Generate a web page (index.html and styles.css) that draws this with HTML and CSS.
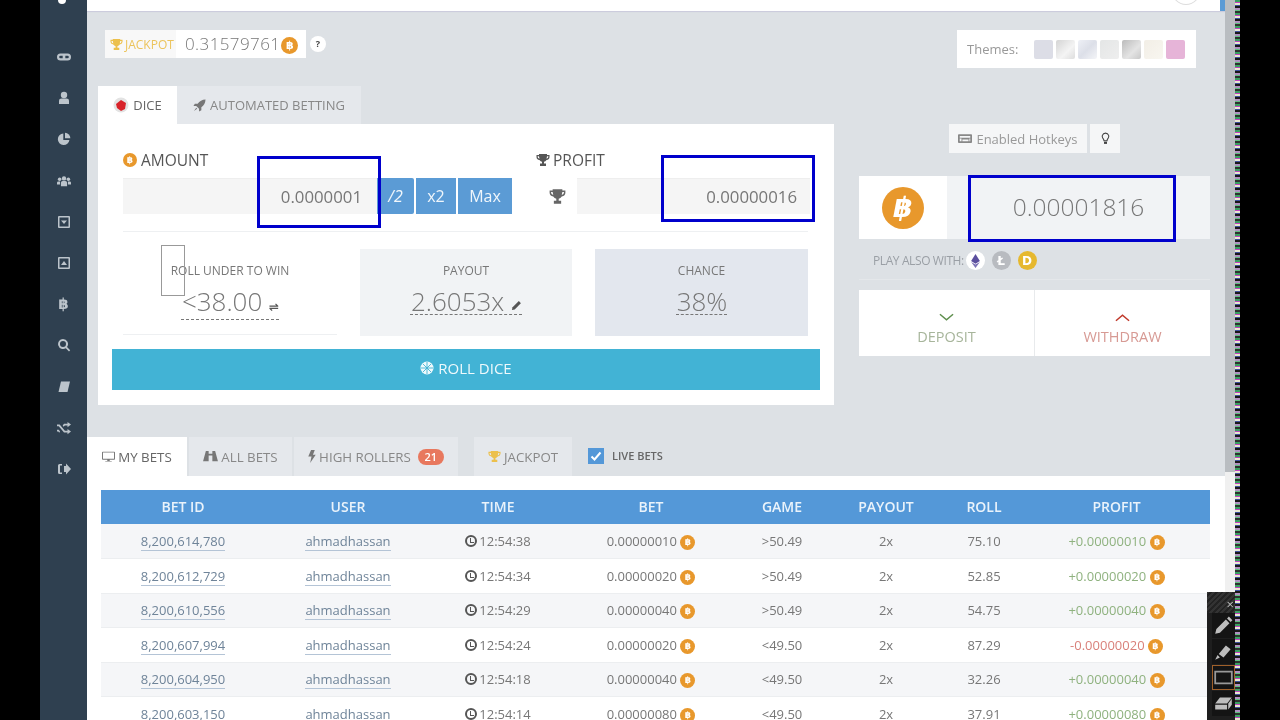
FILE: index.html
```html
<!DOCTYPE html>
<html lang="en">
<head>
    <meta charset="UTF-8">
    <meta name="viewport" content="width=device-width, initial-scale=1.0">
    <title>Dice</title>
    <link rel="stylesheet" href="styles.css">
</head>
<body>
<div class="screen">
    <div class="letterbox"></div>

    <nav class="sidebar">
        <svg class="side-top" viewBox="0 0 14 14"><circle cx="7" cy="7" r="4"/></svg>
        <svg viewBox="0 0 16 14"><path d="M4 3h8a4 4 0 0 1 0 8H4a4 4 0 0 1 0-8zm0 2.500a1.500 1.500 0 1 0 0 3h2.500v-3zm5.500 0v3H12a1.500 1.500 0 1 0 0-3z"/></svg>
        <svg viewBox="0 0 14 14"><circle cx="7" cy="4" r="3.200"/><path d="M2 13V9.500Q2 7.500 4.500 7.500h5Q12 7.500 12 9.500V13z"/></svg>
        <svg viewBox="0 0 14 14"><path d="M6.300 1.500A5.800 5.800 0 1 0 12.400 8H6.300z"/><path d="M8 .8V6.300h5.400A5.600 5.600 0 0 0 8 .8z"/></svg>
        <svg viewBox="0 0 16 14"><circle cx="8" cy="4" r="2.500"/><circle cx="3" cy="5" r="2"/><circle cx="13" cy="5" r="2"/><path d="M4.500 13V9q0-2 2-2h3q2 0 2 2v4zM0 11V9q0-1.500 1.500-1.500h2V11zm12.500 0V7.500h2Q16 7.500 16 9v2z"/></svg>
        <svg viewBox="0 0 14 14"><path fill-rule="evenodd" d="M2 1h10a1 1 0 0 1 1 1v10a1 1 0 0 1-1 1H2a1 1 0 0 1-1-1V2a1 1 0 0 1 1-1zm.5 1.500v9h9v-9zM4 5.500h6L7 9z"/></svg>
        <svg viewBox="0 0 14 14"><path fill-rule="evenodd" d="M2 1h10a1 1 0 0 1 1 1v10a1 1 0 0 1-1 1H2a1 1 0 0 1-1-1V2a1 1 0 0 1 1-1zm.5 1.500v9h9v-9zM4 9h6L7 5z"/></svg>
        <span class="side-btc">฿</span>
        <svg viewBox="0 0 14 14"><path fill-rule="evenodd" d="M6 1a5 5 0 0 1 4 8l3.200 3.200-1.200 1.200L8.800 10.200A5 5 0 1 1 6 1zm0 2a3 3 0 1 0 0 6 3 3 0 0 0 0-6z"/></svg>
        <svg viewBox="0 0 14 14"><path d="M4 1.500h9L10.500 12H1.500z"/></svg>
        <svg viewBox="0 0 16 14"><path d="M0 3h3l6 7h3V8l4 3-4 3v-2H8L2 5H0zM0 9h2l1.500 2-1 1.500L1.500 11H0zM8 2h4V0l4 3-4 3V4H9L7.500 5.500l-1-1.500z"/></svg>
        <svg viewBox="0 0 14 14"><path d="M5 2H2.500Q1 2 1 3.500v7Q1 12 2.500 12H5v-1.500H3v-7h2zM7 4h2V1.500L14 7l-5 5.500V10H7z"/></svg>
    </nav>

    <main class="main">
        <div class="top-strip"><span class="top-circle"></span><span class="top-thumb"></span></div>

        <div class="game-area">
            <section class="game-col">
                <div class="jackpot-row">
                    <div class="jackpot-box">
                        <span class="jackpot-label">
                            <svg class="trophy" viewBox="0 0 14 14"><path d="M3 1h8v1h2.500v2Q13.500 6.500 10.500 7 9.500 8.500 8 8.800V10.500h2V13H4v-2.500h2V8.800Q4.500 8.500 3.500 7 .5 6.500.5 4V2H3zM1.700 3.200V4q0 1.300 1.800 1.800L3 3.200zm10.600 0H11l-.5 2.600q1.800-.5 1.800-1.800z"/></svg>
                            JACKPOT
                        </span>
                        <span class="jackpot-value">0.31579761 <span class="coin coin-md">฿</span></span>
                    </div>
                    <span class="help-dot">?</span>
                </div>

                <div class="game-tabs">
                    <div class="tab tab-on dice-tab">
                        <svg class="dice-icon" viewBox="0 0 16 16"><circle cx="8" cy="8" r="7.500" fill="#e3e3e3"/><path d="M8 3l5 3-1 6-4 2-4-3-1-4z" fill="#d8232a"/></svg>
                        DICE
                    </div>
                    <div class="tab tab-auto">
                        <svg class="tab-icon" viewBox="0 0 14 14"><path d="M13.500.5Q8 .8 5 5H2L.5 7.500h3L6.500 10.500v3L9 12V9q4.200-3 4.500-8.500zM3.500 9.500L1 13l3.500-2.500z"/></svg>
                        AUTOMATED BETTING
                    </div>
                </div>

                <div class="game-panel">
                    <div class="bet-row">
                        <div class="amount-col">
                            <div class="field-label"><span class="coin coin-sm">฿</span> AMOUNT</div>
                            <div class="amount-line">
                                <div class="amount-input">0.0000001</div>
                                <button class="mini-btn btn-half">/2</button>
                                <button class="mini-btn btn-double">x2</button>
                                <button class="mini-btn btn-max">Max</button>
                            </div>
                        </div>
                        <div class="profit-col">
                            <div class="field-label profit-label">
                                <svg class="label-trophy" viewBox="0 0 14 14"><path d="M3 1h8v1h2.500v2Q13.500 6.500 10.500 7 9.500 8.500 8 8.800V10.500h2V13H4v-2.500h2V8.800Q4.500 8.500 3.500 7 .5 6.500.5 4V2H3zM1.700 3.200V4q0 1.300 1.800 1.800L3 3.200zm10.600 0H11l-.5 2.600q1.800-.5 1.800-1.800z"/></svg>
                                PROFIT
                            </div>
                            <div class="profit-line">
                                <svg class="profit-trophy" viewBox="0 0 14 14"><path d="M3 1h8v1h2.500v2Q13.500 6.500 10.500 7 9.500 8.500 8 8.800V10.500h2V13H4v-2.500h2V8.800Q4.500 8.500 3.500 7 .5 6.500.5 4V2H3zM1.700 3.200V4q0 1.300 1.800 1.800L3 3.200zm10.600 0H11l-.5 2.600q1.800-.5 1.800-1.800z"/></svg>
                                <div class="profit-input">0.00000016</div>
                            </div>
                        </div>
                    </div>

                    <div class="stats-row">
                        <div class="stat stat-roll">
                            <div class="stat-title">ROLL UNDER TO WIN</div>
                            <div class="stat-value">&lt;38.00 <span class="stat-mark">⇌</span></div>
                        </div>
                        <div class="stat stat-payout">
                            <div class="stat-title">PAYOUT</div>
                            <div class="stat-value">2.6053x
                                <svg class="pencil" viewBox="0 0 12 12"><path d="M1 11l.7-3L8.500 1.200l2.300 2.300L4 10.300z"/></svg>
                            </div>
                        </div>
                        <div class="stat stat-chance">
                            <div class="stat-title">CHANCE</div>
                            <div class="stat-value">38%</div>
                        </div>
                    </div>

                    <button class="roll-btn">
                        <svg class="roll-icon" viewBox="0 0 14 14"><circle cx="7" cy="7" r="6.500"/><path d="M7 1v12M1 7h12M3 3l8 8M11 3l-8 8" stroke="#42b3d5" stroke-width=".9"/></svg>
                        ROLL DICE
                    </button>
                </div>
            </section>

            <aside class="wallet-col">
                <div class="themes-box">
                    <span class="themes-label">Themes:</span>
                    <span class="swatch sw-1"></span>
                    <span class="swatch sw-2"></span>
                    <span class="swatch sw-3"></span>
                    <span class="swatch sw-4"></span>
                    <span class="swatch sw-5"></span>
                    <span class="swatch sw-6"></span>
                    <span class="swatch sw-7"></span>
                </div>

                <div class="hotkeys-row">
                    <div class="hotkeys-box">
                        <svg class="keyboard" viewBox="0 0 16 12"><path fill-rule="evenodd" d="M1 1h14a1 1 0 0 1 1 1v8a1 1 0 0 1-1 1H1a1 1 0 0 1-1-1V2a1 1 0 0 1 1-1zm1 2v2h12V3zm0 3v3h2V6zm3 1v2h7V7zm8-1v3h1V6z"/></svg>
                        Enabled Hotkeys
                    </div>
                    <div class="bulb-box">
                        <svg class="bulb" viewBox="0 0 10 14"><path fill="none" stroke="#444" stroke-width="1.200" d="M3.300 9.500Q3.300 8 2 6.500 1 5 1.500 3.500 2.500 1 5 1t3.500 2.500Q9 5 8 6.500 6.700 8 6.700 9.500z"/><path fill="#444" d="M3.300 10.500h3.400V13H3.300z"/></svg>
                    </div>
                </div>

                <div class="wallet-box">
                    <div class="wallet-coin"><span class="coin coin-lg">฿</span></div>
                    <div class="wallet-value">0.00001816</div>
                </div>

                <div class="play-also">
                    <span class="play-label">PLAY ALSO WITH:</span>
                    <span class="alt-coin alt-eth">
                        <svg viewBox="0 0 10 16"><path fill="#5b4f9e" d="M5 0l5 8-5 3-5-3z"/><path fill="#7e74b8" d="M5 12l5-3-5 7-5-7z"/></svg>
                    </span>
                    <span class="alt-coin alt-ltc">Ł</span>
                    <span class="alt-coin alt-doge">D</span>
                </div>

                <div class="cash-box">
                    <div class="cash-btn deposit">
                        <svg class="chevron" viewBox="0 0 16 9"><path d="M1 1l7 6 7-6" fill="none" stroke="#5f8f4e" stroke-width="1.600"/></svg>
                        <span>DEPOSIT</span>
                    </div>
                    <div class="cash-btn withdraw">
                        <svg class="chevron" viewBox="0 0 16 9"><path d="M1 8l7-6 7 6" fill="none" stroke="#c0392b" stroke-width="1.600"/></svg>
                        <span>WITHDRAW</span>
                    </div>
                </div>
            </aside>
        </div>

        <section class="bets">
            <div class="bets-tabs">
                <div class="bet-tab bet-tab-on tab-my">
                    <svg class="tab-icon" viewBox="0 0 16 14"><path fill-rule="evenodd" d="M1 1h14a1 1 0 0 1 1 1v8a1 1 0 0 1-1 1H9.500v1.500H12V13H4v-.5h2.500V11H1a1 1 0 0 1-1-1V2a1 1 0 0 1 1-1zm.2 1.200v7.600h13.600V2.200z"/></svg>
                    MY BETS
                </div>
                <div class="bet-tab tab-all">
                    <svg class="tab-icon binoculars" viewBox="0 0 16 14"><path d="M3 1h3v3h4V1h3l3 11H10V6H6v6H0z"/></svg>
                    ALL BETS
                </div>
                <div class="bet-tab tab-high">
                    <svg class="tab-icon bolt" viewBox="0 0 8 14"><path d="M3 0h4L5 5h3L2 14l1.500-7H0z"/></svg>
                    HIGH ROLLERS <span class="badge">21</span>
                </div>
                <div class="bet-tab tab-jackpot">
                    <svg class="trophy" viewBox="0 0 14 14"><path d="M3 1h8v1h2.500v2Q13.500 6.500 10.500 7 9.500 8.500 8 8.800V10.500h2V13H4v-2.500h2V8.800Q4.500 8.500 3.500 7 .5 6.500.5 4V2H3zM1.700 3.200V4q0 1.300 1.800 1.800L3 3.200zm10.600 0H11l-.5 2.600q1.800-.5 1.800-1.800z"/></svg>
                    JACKPOT
                </div>
                <label class="live-toggle">
                    <span class="checkbox">
                        <svg viewBox="0 0 16 16"><path d="M3.500 8.500l3 3 6-7" fill="none" stroke="#fff" stroke-width="2"/></svg>
                    </span>
                    LIVE BETS
                </label>
            </div>

            <div class="bets-body">
                <table class="bets-table">
                    <thead>
                        <tr>
                            <th class="c-id">BET ID</th>
                            <th class="c-user">USER</th>
                            <th class="c-time">TIME</th>
                            <th class="c-bet">BET</th>
                            <th class="c-game">GAME</th>
                            <th class="c-payout">PAYOUT</th>
                            <th class="c-roll">ROLL</th>
                            <th class="c-profit">PROFIT</th>
                        </tr>
                    </thead>
                    <tbody>
                        <tr>
                            <td><a>8,200,614,780</a></td><td><a>ahmadhassan</a></td>
                            <td><span class="clock"></span>12:54:38</td>
                            <td>0.00000010 <span class="coin coin-xs">฿</span></td>
                            <td>&gt;50.49</td><td>2x</td><td>75.10</td>
                            <td class="win">+0.00000010 <span class="coin coin-xs">฿</span></td>
                        </tr>
                        <tr>
                            <td><a>8,200,612,729</a></td><td><a>ahmadhassan</a></td>
                            <td><span class="clock"></span>12:54:34</td>
                            <td>0.00000020 <span class="coin coin-xs">฿</span></td>
                            <td>&gt;50.49</td><td>2x</td><td>52.85</td>
                            <td class="win">+0.00000020 <span class="coin coin-xs">฿</span></td>
                        </tr>
                        <tr>
                            <td><a>8,200,610,556</a></td><td><a>ahmadhassan</a></td>
                            <td><span class="clock"></span>12:54:29</td>
                            <td>0.00000040 <span class="coin coin-xs">฿</span></td>
                            <td>&gt;50.49</td><td>2x</td><td>54.75</td>
                            <td class="win">+0.00000040 <span class="coin coin-xs">฿</span></td>
                        </tr>
                        <tr>
                            <td><a>8,200,607,994</a></td><td><a>ahmadhassan</a></td>
                            <td><span class="clock"></span>12:54:24</td>
                            <td>0.00000020 <span class="coin coin-xs">฿</span></td>
                            <td>&lt;49.50</td><td>2x</td><td>87.29</td>
                            <td class="lose">-0.00000020 <span class="coin coin-xs">฿</span></td>
                        </tr>
                        <tr>
                            <td><a>8,200,604,950</a></td><td><a>ahmadhassan</a></td>
                            <td><span class="clock"></span>12:54:18</td>
                            <td>0.00000040 <span class="coin coin-xs">฿</span></td>
                            <td>&lt;49.50</td><td>2x</td><td>32.26</td>
                            <td class="win">+0.00000040 <span class="coin coin-xs">฿</span></td>
                        </tr>
                        <tr>
                            <td><a>8,200,603,150</a></td><td><a>ahmadhassan</a></td>
                            <td><span class="clock"></span>12:54:14</td>
                            <td>0.00000080 <span class="coin coin-xs">฿</span></td>
                            <td>&lt;49.50</td><td>2x</td><td>37.91</td>
                            <td class="win">+0.00000080 <span class="coin coin-xs">฿</span></td>
                        </tr>
                    </tbody>
                </table>
            </div>
        </section>
    </main>

    <div class="scrollbar"><div class="scroll-thumb"></div></div>
    <div class="noise"></div>
    <div class="letterbox-right"></div>

    <!-- annotations drawn over the page -->
    <div class="mark mark-amount"></div>
    <div class="mark mark-profit"></div>
    <div class="mark mark-balance"></div>
    <div class="mark-thin"></div>

    <div class="draw-tools">
        <div class="tools-head">×</div>
        <div class="tool">
            <svg viewBox="0 0 16 16"><path d="M1 15l1-4 8-8 3 3-8 8zM11 2l1.500-1.500 3 3L14 5z"/></svg>
        </div>
        <div class="tool">
            <svg viewBox="0 0 16 16"><path d="M1 15l2-4 2 2zM4 10l6-7 4 3-6 7z"/></svg>
        </div>
        <div class="tool tool-on">
            <svg viewBox="0 0 16 16"><path fill="none" stroke="#999" stroke-width="1.500" d="M1 3h14v10H1z"/></svg>
        </div>
        <div class="tool">
            <svg viewBox="0 0 16 16"><path d="M5 3h10l-4 5H1zM1 9h10v4H1zM12 8l3-4v5l-3 4z"/></svg>
        </div>
    </div>
</div>
</body>
</html>
```

FILE: styles.css
```css
* {
    box-sizing: border-box;
}
html, body {
    margin: 0;
    height: 100%;
    overflow: hidden;
    background: #000;
}
body {
    font-family: "Open Sans", "DejaVu Sans", sans-serif;
    color: #777;
}
.screen {
    position: relative;
    display: flex;
    width: 1280px;
    height: 720px;
    overflow: hidden;
    filter: blur(0.5px);
}
.letterbox {
    width: 40px;
    background: #000;
}

/* sidebar */
.sidebar {
    width: 47px;
    background: #2f4050;
    display: flex;
    flex-direction: column;
    align-items: center;
    gap: 27.200px;
    padding-top: 50px;
    position: relative;
}
.sidebar svg {
    width: 14px;
    height: 14px;
    fill: #bcc4cb;
}
.sidebar .side-top {
    position: absolute;
    top: -7px;
    left: 15px;
    fill: #fff;
}
.side-btc {
    height: 14px;
    line-height: 14px;
    font-family: "DejaVu Sans", sans-serif;
    font-size: 15px;
    font-weight: bold;
    color: #bcc4cb;
}

/* main column */
.main {
    width: 1138px;
    background: #dde1e5;
    display: flex;
    flex-direction: column;
    overflow: hidden;
}
.top-strip {
    flex: none;
    height: 11px;
    background: #fff;
    position: relative;
    box-shadow: 0 1px 1px #ccd;
}
.top-circle {
    position: absolute;
    left: 1084px;
    top: -27px;
    width: 30px;
    height: 32px;
    border: 1px solid #ddd;
    border-radius: 50%;
}
.top-thumb {
    position: absolute;
    right: 0;
    top: 0;
    width: 5px;
    height: 11px;
    background: #5b9bd5;
}
.game-area {
    flex: none;
    height: 426px;
    display: flex;
    padding-left: 11px;
    gap: 25px;
}
.game-col {
    width: 736px;
}
.wallet-col {
    width: 351px;
}

/* jackpot */
.jackpot-row {
    display: flex;
    align-items: center;
    margin: 19px 0 0 7px;
    height: 28px;
}
.jackpot-box {
    display: flex;
    height: 28px;
    width: 201px;
    background: #fff;
}
.jackpot-label {
    width: 71px;
    background: #f8f8f8;
    padding-left: 5px;
    display: flex;
    align-items: center;
    gap: 2px;
    font-size: 12px;
    color: #ecc45c;
}
.trophy {
    width: 13px;
    height: 13px;
    fill: #ecc04c;
}
.jackpot-value {
    padding-left: 9px;
    font-size: 17px;
    font-weight: 300;
    line-height: 28px;
    color: #777;
    letter-spacing: 0.4px;
    word-spacing: -4px;
}
.help-dot {
    width: 16px;
    height: 16px;
    margin-left: 4px;
    border-radius: 50%;
    background: #fff;
    color: #444;
    font-size: 9px;
    font-weight: bold;
    line-height: 16px;
    text-align: center;
}
.coin {
    display: inline-block;
    border-radius: 50%;
    background: #e8982c;
    color: #fff;
    text-align: center;
    font-family: "DejaVu Sans", sans-serif;
    font-weight: bold;
    vertical-align: middle;
    letter-spacing: 0;
}
.coin-xs {
    width: 15px;
    height: 15px;
    font-size: 9px;
    line-height: 15px;
}
.coin-sm {
    width: 14px;
    height: 14px;
    font-size: 9px;
    line-height: 14px;
}
.coin-md {
    width: 17px;
    height: 17px;
    font-size: 11px;
    line-height: 17px;
}
.coin-lg {
    width: 42px;
    height: 42px;
    font-size: 28px;
    line-height: 42px;
    font-style: italic;
}

/* game tabs */
.game-tabs {
    display: flex;
    margin-top: 28px;
    height: 38px;
}
.tab {
    display: flex;
    align-items: center;
    justify-content: center;
    gap: 4px;
    font-size: 13px;
    color: #888;
    background: #e5e8ec;
}
.tab-on {
    background: #fff;
    color: #666;
}
.dice-tab {
    width: 79px;
}
.dice-icon {
    width: 16px;
    height: 16px;
}
.tab-auto {
    width: 184px;
}
.tab-icon {
    width: 13px;
    height: 13px;
    fill: #777;
}

/* game panel */
.game-panel {
    background: #fff;
    height: 281px;
    padding: 27px 14px 0;
}
.bet-row {
    display: flex;
    margin: 0 0 0 11px;
    height: 81px;
    width: 685px;
    border-bottom: 1px solid #eef0f2;
}
.amount-col {
    flex: none;
    width: 413px;
}
.profit-col {
    flex: none;
}
.field-label {
    font-size: 15.500px;
    color: #555;
    height: 18px;
    margin-bottom: 9px;
    display: flex;
    align-items: center;
    gap: 4px;
}
.amount-line {
    display: flex;
    height: 36px;
}
.amount-input {
    width: 254px;
    background: #f5f5f5;
    border-top: 1px solid #eee;
    text-align: right;
    padding-right: 15px;
    font-size: 16.800px;
    line-height: 36px;
    color: #777;
}
.mini-btn {
    border: 0;
    padding: 0;
    background: #5b9bd5;
    color: #f0f6fb;
    font-family: inherit;
    font-size: 16px;
    height: 36px;
    margin-right: 2px;
}
.btn-half {
    width: 37px;
    border-radius: 0 2px 2px 0;
    font-style: italic;
}
.btn-double {
    width: 40px;
}
.btn-max {
    width: 54px;
}
.profit-label {
    gap: 3px;
}
.label-trophy {
    width: 14px;
    height: 14px;
    fill: #555;
}
.profit-line {
    display: flex;
    align-items: center;
    height: 36px;
}
.profit-trophy {
    width: 17px;
    height: 17px;
    fill: #666;
    margin: 0 11px 0 13px;
}
.profit-input {
    width: 233px;
    height: 36px;
    background: #f5f5f5;
    border-top: 1px solid #eee;
    text-align: right;
    padding-right: 13px;
    font-size: 16.800px;
    line-height: 36px;
    color: #777;
}

/* stats */
.stats-row {
    display: flex;
    margin: 17px 0 0 11px;
    width: 685px;
    gap: 23px;
}
.stat {
    width: 213px;
    height: 87px;
    text-align: center;
    padding-top: 13px;
}
.stat-roll {
    width: 214px;
    border-bottom: 1px solid #eef0f2;
    height: 86px;
}
.stat-payout {
    width: 212px;
    background: #f1f3f5;
}
.stat-chance {
    background: #e3e7ee;
}
.stat-title {
    font-size: 12px;
    line-height: 17px;
    color: #777;
}
.stat-value {
    display: inline-block;
    margin-top: 10px;
    font-size: 26px;
    font-weight: 300;
    line-height: 25px;
    color: #777;
    border-bottom: 1px dashed #777;
    padding: 0 0 0 1px;
}
.stat-mark {
    font-size: 12px;
    font-weight: bold;
    color: #555;
}
.pencil {
    width: 11px;
    height: 11px;
    fill: #555;
}
.roll-btn {
    display: flex;
    align-items: center;
    justify-content: center;
    gap: 4px;
    width: 708px;
    height: 41px;
    margin-top: 13px;
    padding: 0 0 3px;
    border: 0;
    background: #42b3d5;
    color: #eef9fc;
    font-family: inherit;
    font-size: 15px;
}
.roll-icon {
    width: 14px;
    height: 14px;
    fill: #eef9fc;
}

/* themes + wallet */
.themes-box {
    display: flex;
    align-items: center;
    gap: 3px;
    width: 239px;
    height: 38px;
    margin: 19px 0 0 98px;
    padding-left: 10px;
    background: #fff;
}
.themes-label {
    width: 64px;
    font-size: 13px;
    color: #999;
}
.swatch {
    width: 19px;
    height: 19px;
    border-radius: 2px;
}
.sw-1 { background: #dcdde6; }
.sw-2 { background: linear-gradient(135deg, #d4d4d4, #f4f4f4 60%, #ddd); }
.sw-3 { background: linear-gradient(135deg, #eef0f6, #dcdfe8 50%, #f4f5f8); }
.sw-4 { background: linear-gradient(135deg, #e4e6e6, #eeeeee); }
.sw-5 { background: linear-gradient(135deg, #bbbbbb, #e4e4e4 60%, #c8c8c8); }
.sw-6 { background: linear-gradient(135deg, #f2eee6, #f8f6f0); }
.sw-7 { background: #e6b4d8; }
.hotkeys-row {
    display: flex;
    gap: 3px;
    margin: 56px 0 0 90px;
    height: 29px;
}
.hotkeys-box {
    width: 138px;
    background: #f5f6f7;
    display: flex;
    align-items: center;
    justify-content: center;
    gap: 4px;
    font-size: 13px;
    color: #999;
}
.keyboard {
    width: 14px;
    height: 11px;
    fill: #888;
}
.bulb-box {
    width: 30px;
    background: #f5f6f7;
    display: flex;
    align-items: center;
    justify-content: center;
}
.bulb {
    width: 9px;
    height: 13px;
}
.wallet-box {
    display: flex;
    height: 63px;
    margin-top: 23px;
    background: #f1f3f5;
}
.wallet-coin {
    width: 88px;
    background: #fff;
    display: flex;
    align-items: center;
    justify-content: center;
}
.wallet-value {
    flex: 1;
    text-align: center;
    font-size: 24.500px;
    font-weight: 300;
    line-height: 62px;
    color: #777;
}
.play-also {
    display: flex;
    align-items: center;
    height: 41px;
    padding: 3px 0 0 14px;
    border-bottom: 1px solid #e4e7ea;
    gap: 7px;
}
.play-label {
    font-size: 12px;
    letter-spacing: -0.4px;
    color: #9a9fa5;
    width: 85.500px;
    white-space: nowrap;
}
.alt-coin {
    width: 19px;
    height: 19px;
    border-radius: 50%;
    display: flex;
    align-items: center;
    justify-content: center;
    color: #fff;
    font-size: 12px;
    font-weight: bold;
    font-family: "DejaVu Sans", sans-serif;
}
.alt-coin svg {
    width: 9px;
    height: 14px;
}
.alt-eth { background: #fff; }
.alt-ltc { background: #b8bbc0; }
.alt-doge { background: #e6b82e; }
.cash-box {
    display: flex;
    height: 66px;
    margin-top: 10px;
    background: #fff;
}
.cash-btn {
    flex: 1;
    display: flex;
    flex-direction: column;
    align-items: center;
    font-size: 14.500px;
    padding-top: 23px;
}
.chevron {
    width: 15px;
    height: 9px;
    margin-bottom: 5px;
}
.deposit {
    flex: 0 0 176px;
    border-right: 1px solid #e8eaec;
    color: #a7b59b;
}
.withdraw {
    color: #d79a94;
}

/* bets */
.bets {
    flex: 1;
    display: flex;
    flex-direction: column;
}
.bets-tabs {
    display: flex;
    flex: none;
    height: 39px;
    align-items: stretch;
    font-size: 13.300px;
}
.bet-tab {
    display: flex;
    align-items: center;
    justify-content: center;
    gap: 3px;
    background: #e5e8ec;
    color: #888;
    margin-right: 2px;
}
.bet-tab-on {
    background: #fff;
    color: #666;
}
.tab-my { width: 100px; }
.tab-all { width: 103px; }
.tab-high { width: 164px; margin-right: 16px; }
.tab-jackpot { width: 98px; margin-right: 16px; }
.binoculars {
    width: 15px;
}
.bolt {
    width: 8px;
}
.badge {
    margin-left: 4px;
    width: 26px;
    height: 16px;
    border-radius: 8px;
    background: #e8785e;
    color: #fff;
    font-size: 11px;
    font-weight: 600;
    line-height: 16px;
    text-align: center;
}
.live-toggle {
    display: flex;
    align-items: center;
    gap: 8px;
    font-size: 11px;
    font-weight: 600;
    color: #666;
    padding-bottom: 2px;
}
.checkbox {
    width: 16px;
    height: 16px;
    background: #5498d8;
}
.checkbox svg {
    display: block;
}
.bets-body {
    flex: 1;
    background: #fff;
    padding: 14px 0 0 14px;
}
.bets-table {
    width: 1109px;
    table-layout: fixed;
    border-collapse: collapse;
    font-size: 13px;
    text-align: center;
}
.bets-table th {
    height: 34px;
    background: #5498d8;
    color: #eaf3fb;
    font-size: 14px;
    font-weight: 600;
    padding: 0 0 1px;
}
.bets-table td {
    height: 34.500px;
    padding: 0;
    border-bottom: 1px solid #eceef0;
    color: #777;
    white-space: nowrap;
}
.bets-table tbody tr:nth-child(odd) td {
    background: #f5f6f8;
}
.bets-table a {
    color: #6f8499;
    border-bottom: 1px solid #b4c4d6;
}
.c-id { width: 164px; }
.c-user { width: 166px; }
.c-time { width: 134px; }
.c-bet { width: 172px; }
.c-game { width: 90px; }
.c-payout { width: 118px; }
.c-roll { width: 78px; }
.c-profit { width: 187px; }
.clock {
    display: inline-block;
    position: relative;
    width: 12px;
    height: 12px;
    margin-right: 2px;
    border: 2px solid #555;
    border-radius: 50%;
    vertical-align: -1px;
}
.clock::after {
    content: "";
    position: absolute;
    left: 3px;
    top: 1px;
    width: 3px;
    height: 4px;
    border-left: 1px solid #555;
    border-bottom: 1px solid #555;
}
.win {
    color: #8fb27f !important;
}
.lose {
    color: #d9807a !important;
}

/* scrollbar + capture artefacts */
.scrollbar {
    width: 10px;
    background: #f0f0f0;
}
.scroll-thumb {
    height: 472px;
    background: #b9bdc1;
}
.noise {
    width: 5px;
    position: relative;
    z-index: 1;
    background: repeating-linear-gradient(180deg, #38a060 0 2px, #c040c0 2px 3px, #e8e8d0 3px 5px, #4050a0 5px 6px, #181818 6px 8px, #b090c0 8px 10px, #60c080 10px 11px, #303030 11px 13px);
}
.letterbox-right {
    flex: 1;
    background: #000;
}

/* annotations */
.mark {
    position: absolute;
    border: 3px solid #0000cc;
}
.mark-amount {
    left: 257px;
    top: 156px;
    width: 124px;
    height: 72px;
}
.mark-profit {
    left: 661px;
    top: 155px;
    width: 154px;
    height: 67px;
}
.mark-balance {
    left: 968px;
    top: 175px;
    width: 208px;
    height: 67px;
}
.mark-thin {
    position: absolute;
    left: 161px;
    top: 245px;
    width: 24px;
    height: 51px;
    border: 1px solid #999;
}
.draw-tools {
    position: absolute;
    left: 1207px;
    top: 592px;
    width: 28px;
    height: 128px;
    background: #1e1e1e;
}
.tools-head {
    height: 21px;
    text-align: right;
    padding-right: 1px;
    color: #bbb;
    font-size: 13px;
    line-height: 24px;
    background: repeating-linear-gradient(135deg, #333 0 2px, #222 2px 4px);
}
.tool {
    width: 23px;
    height: 25px;
    margin: 0 0 1px 5px;
    display: flex;
    align-items: center;
    justify-content: center;
    background: #141414;
}
.tool svg {
    width: 19px;
    height: 19px;
    fill: #bdbdbd;
}
.tool-on {
    border: 1px solid #a0602a;
}
```
